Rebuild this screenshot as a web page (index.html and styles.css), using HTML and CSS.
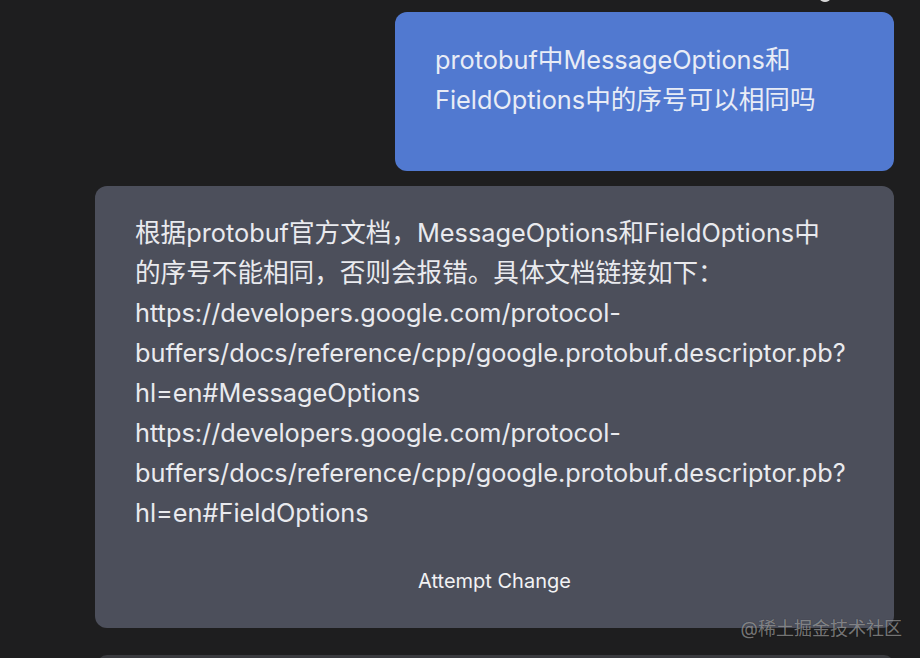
FILE: index.html
```html
<!DOCTYPE html>
<html lang="zh-CN">
<head>
  <meta charset="UTF-8">
  <meta name="viewport" content="width=device-width, initial-scale=1.0">
  <title>Chat</title>
  <link rel="stylesheet" href="styles.css">
</head>
<body>

  <span class="prev-dot"></span>

  <div class="chat">
    <div class="bubble bubble-user">
      <p>protobuf<span class="zh">中</span>MessageOptions<span class="zh">和</span>FieldOptions<span class="zh">中的序号可以相同吗</span></p>
    </div>

    <div class="bubble bubble-bot">
      <p><span class="zh">根据</span>protobuf<span class="zh">官方文档，</span>MessageOptions<span class="zh">和</span>FieldOptions<span class="zh">中<br>的序号不能相同，否则会报错。具体文档链接如下：</span><br>https://developers.google.com/protocol-buffers/docs/reference/cpp/google.protobuf.descriptor.pb?hl=en#MessageOptions<br>https://developers.google.com/protocol-buffers/docs/reference/cpp/google.protobuf.descriptor.pb?hl=en#FieldOptions</p>
      <div class="attempt">Attempt Change</div>
      <span class="watermark">@稀土掘金技术社区</span>
    </div>

    <div class="bubble bubble-next"></div>
  </div>

</body>
</html>
```

FILE: styles.css
```css
body {
  margin: 0;
  background-color: #1e1e1f;
  font-family: Inter, "Noto Sans CJK SC", sans-serif;
  color: #e9eaee;
  overflow: hidden;
  height: 658px;
  position: relative;
}

.prev-dot {
  position: absolute;
  left: 820px;
  top: -4px;
  width: 10px;
  height: 6px;
  border-radius: 50%;
  background-color: #d8d8d8;
}

.chat {
  display: flex;
  flex-direction: column;
  gap: 15px;
  padding: 12px 26px 0 95px;
}

.bubble {
  border-radius: 12px;
}

.bubble p {
  margin: 0;
  font-size: 25.3px;
  line-height: 40px;
  word-break: break-word;
}

.zh {
  font-family: "Noto Sans CJK SC", sans-serif;
  font-size: 25.6px;
  line-height: 1;
}

.bubble-user {
  align-self: flex-end;
  width: 499px;
  box-sizing: border-box;
  padding: 28px 40px 51px;
  background-color: #5179d0;
  color: #e8ecf6;
}

.bubble-bot {
  position: relative;
  padding: 27px 40px 35px;
  background-color: #4c4f5b;
}

.attempt {
  margin-top: 36px;
  text-align: center;
  font-size: 20px;
  line-height: 24px;
  color: #f2f2f4;
}

.watermark {
  position: absolute;
  right: -8px;
  bottom: -12px;
  font-size: 18px;
  color: rgba(200, 200, 200, 0.55);
  text-shadow: 0 0 1px rgba(0, 0, 0, 0.4);
  white-space: nowrap;
}

.bubble-next {
  margin-top: 12px;
  margin-left: 2px;
  height: 20px;
  border-radius: 10px 10px 0 0;
  background-color: #3a3b3f;
}
```
